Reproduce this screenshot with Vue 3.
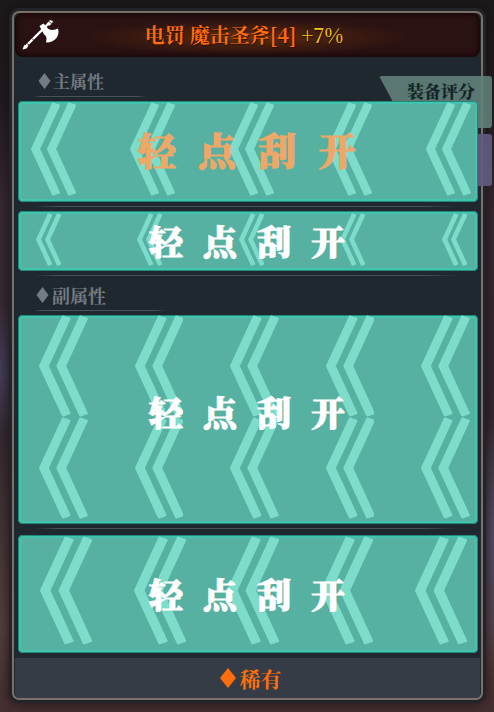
<script setup>

import {ref} from "vue";

const label = ['轻', '点', '刮', '开'];

let panels = ref([
  {id: 'main', rows: 1},
  {id: 'extra', rows: 1},
  {id: 'sub', rows: 2},
  {id: 'skill', rows: 1},
])

</script>

<template>

  <div class="page">
    <div class="card">
      <header class="head">
        <svg class="axe" viewBox="0 0 38 32" aria-hidden="true">
          <path d="M3 28 L27 4" stroke="#fff" stroke-width="2.4" fill="none"/>
          <path d="M0.500 30.500 L2 26.500 L4.500 25.500 L6 27.500 L4.500 29.500 Z" fill="#fff"/>
          <path d="M25 4.500 L28 1 L31 2 L30 4.500 L27 7 Z" fill="#fff"/>
          <path d="M17.500 7 L21.500 4.500 L26.500 10 C29.500 11.500 33 11 36 9.500 C38 16 34 23.500 24 23.500 C24.500 20.500 25.500 17.500 22 15.500 Z" fill="#fff"/>
          <path d="M10 19.500 l2.500 2.500 M27 2.500 l3 2.500 M5 24.500 l2.500 2" stroke="#2a1011" stroke-width="0.8"/>
        </svg>
        <h1>电罚 魔击圣斧[4] <span>+7%</span></h1>
      </header>

      <div class="score">
        <span>装备评分</span>
      </div>
      <div class="side-tab"></div>

      <h2 class="title first">
        <svg viewBox="0 0 12 16" aria-hidden="true"><path d="M6 0 L12 8 L6 16 L0 8 Z" fill="currentColor"/></svg>
        主属性
      </h2>
      <div class="line short"></div>

      <template v-for="(panel, i) in panels" :key="panel.id">
        <template v-if="panel.id === 'sub'">
          <h2 class="title">
            <svg viewBox="0 0 12 16" aria-hidden="true"><path d="M6 0 L12 8 L6 16 L0 8 Z" fill="currentColor"/></svg>
            副属性
          </h2>
          <div class="line short"></div>
        </template>

        <button type="button" class="panel" :class="panel.id">
          <span class="arrows">
            <span v-for="r in panel.rows" :key="r" class="arrow-row">
              <svg v-for="n in 5" :key="n" viewBox="0 0 45 94" aria-hidden="true">
                <g fill="#7ddcca" stroke="#7ddcca" stroke-width="2" stroke-linejoin="round">
                  <path d="M1 47 L22 1.500 L28 3.500 L8 47 L28 90.500 L22 92.500 Z"/>
                  <path d="M17 47 L38 1.500 L44 3.500 L24 47 L44 90.500 L38 92.500 Z"/>
                </g>
              </svg>
            </span>
          </span>
          <span class="label">
            <span v-for="c in label" :key="c">{{ c }}</span>
          </span>
        </button>
        <div v-if="i < panels.length - 1" class="line"></div>
      </template>

      <footer class="foot">
        <svg viewBox="0 0 16 20" aria-hidden="true"><path d="M8 0 L16 10 L8 20 L0 10 Z" fill="currentColor"/></svg>
        稀有
      </footer>
    </div>
  </div>

</template>

<style>
body {
  margin: 0;
  background: #1e1a1b;
}
</style>

<style scoped>

.page {
  box-sizing: border-box;
  min-height: 100vh;
  padding: 11px 11px 11px 12px;
  font-family: "Noto Serif CJK SC", "Noto Sans CJK SC", serif;
  background:
    radial-gradient(ellipse 30px 70px at 0 52%, #45405c, transparent),
    radial-gradient(ellipse 24px 130px at 100% 76%, #56516a, transparent),
    linear-gradient(#1e1a1b 0%, #211b1e 14%, #3a2b34 30%, #35292f 60%, #57403f 88%, #452f30 100%);
}

.card {
  position: relative;
  border: 2px solid #7a716b;
  border-radius: 7px;
  background: #20282f;
  box-shadow: 0 0 0 3px #22242a, 0 0 12px 4px rgba(15, 13, 16, 0.7);
}

.head {
  display: grid;
  grid-template-columns: 38px 1fr 38px;
  align-items: center;
  height: 44px;
  margin: 0 1px;
  padding: 0 14px 0 7px;
  box-sizing: border-box;
  border-radius: 8px;
  background: radial-gradient(ellipse 36% 40% at 50% 55%, #6e3216, #47220f 40%, #2a1112 100%);
  box-shadow: inset 0 0 4px 2px #180809;

  .axe {
    width: 38px;
    height: 32px;
  }

  h1 {
    margin: 0;
    text-align: center;
    white-space: nowrap;
    font-size: 20px;
    line-height: 28px;
    font-weight: bold;
    color: #ff6d0c;
    text-shadow: 1px 1px 1px #2a0d05;
  }

  span {
    font-weight: 500;
    color: #f5c518;
  }
}

.title {
  display: flex;
  align-items: center;
  gap: 3px;
  height: 30px;
  margin: 0;
  padding: 0 0 0 22px;
  font-size: 18px;
  font-weight: bold;
  color: #737b83;

  svg {
    width: 13px;
    height: 16px;
  }

  &.first {
    padding: 9px 0 0 24px;
    gap: 2px;
    font-size: 17px;
    line-height: 24px;
  }
}

.line {
  height: 1px;
  margin: 4px 24px 4px 20px;
  background: linear-gradient(90deg, transparent, #46545a 6%, #46545a 92%, transparent);

  &.short {
    width: 24%;
    margin: 0 0 4px 20px;
  }
}

.title:not(.first) + .line.short {
  width: 28%;
}

.score {
  position: absolute;
  top: 63px;
  right: -11px;
  width: 113px;
  height: 52px;
  box-sizing: border-box;
  padding: 3px 17px 0 0;
  border-radius: 3px;
  text-align: right;
  font-size: 17px;
  line-height: 24px;
  font-weight: 900;
  color: #14262a;
  background: rgba(98, 130, 124, 0.88);
  clip-path: polygon(0 0, 100% 0, 100% 100%, 28px 100%);
}

.side-tab {
  position: absolute;
  top: 121px;
  right: -11px;
  width: 30px;
  height: 52px;
  border-radius: 3px;
  background: rgba(98, 91, 128, 0.92);
}

.panel {
  position: relative;
  display: grid;
  width: calc(100% - 7px);
  margin: 0 3px 0 4px;
  padding: 0;
  border: 0;
  border-radius: 5px;
  font: inherit;
  font-size: 34px;
  font-weight: 900;
  line-height: 48px;
  color: #fff;
  background: #56b1a2;
  box-shadow: inset 0 0 0 1px #23897c, inset 0 0 0 3px #42c3ae;
  cursor: pointer;

  .arrows, .label {
    grid-area: 1 / 1;
  }

  .arrow-row {
    display: flex;
    justify-content: space-between;
  }

  .label {
    display: flex;
    align-items: center;
    justify-content: center;
    gap: 20px;
    padding-right: 2px;
    z-index: 1;
    -webkit-text-stroke: 1px currentColor;
  }
}

.main {
  font-size: 38px;
  color: #eda868;

  .arrows {
    padding: 1px 7px 6px 13px;
  }

  .label {
    gap: 22px;
    padding-bottom: 6px;
  }

  svg {
    height: 94px;
  }
}

.extra {
  .arrows {
    padding: 2px 11px 5px 18px;
  }

  svg {
    height: 53px;
  }
}

.sub {
  .arrows {
    padding: 0 8px 5px 21px;
  }

  .label {
    padding-bottom: 16px;
  }

  svg {
    height: 102px;
  }
}

.skill {
  margin-top: 6px;

  .arrows {
    padding: 1px 11px 8px 22px;
  }

  svg {
    height: 109px;
  }
}

.foot {
  display: flex;
  align-items: center;
  justify-content: center;
  gap: 4px;
  height: 40px;
  margin: 5px 1px 0;
  padding-left: 6px;
  border-radius: 0 0 4px 4px;
  font-size: 21px;
  font-weight: bold;
  color: #ff6d0c;
  background: #363c46;

  svg {
    width: 16px;
    height: 20px;
  }
}

</style>
